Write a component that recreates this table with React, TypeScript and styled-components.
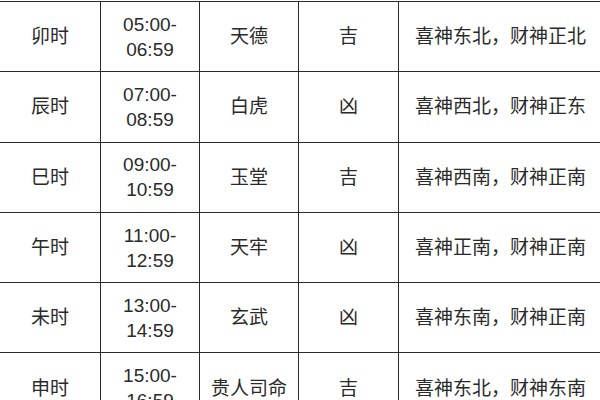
import React from "react";
import styled, { createGlobalStyle } from "styled-components";

const Global = createGlobalStyle`
  html, body { margin: 0; padding: 0; background: #fff; }
  body { overflow: hidden; width: 600px; height: 400px; }
`;

const Frame = styled.div`
  width: 600px;
  height: 400px;
  overflow: hidden;
  padding-top: 1px;
  box-sizing: border-box;
`;

const Table = styled.table`
  border-collapse: collapse;
  table-layout: fixed;
  width: 603px;
  margin-left: -1px;
  font-family: "Liberation Sans", "Noto Sans CJK SC", sans-serif;
  font-size: 19px;
  color: #2a2a2a;
`;

const Col = styled.col<{ $w: number }>`
  width: ${(p) => p.$w}px;
`;

const Cell = styled.td`
  border: 1px solid #2b2b2b;
  height: 69.3px;
  padding: 0;
  text-align: center;
  vertical-align: middle;
  line-height: 25px;
`;

type Row = { name: string; from: string; to: string; god: string; luck: string; dir: string };

const rows: Row[] = [
  { name: "卯时", from: "05:00-", to: "06:59", god: "天德", luck: "吉", dir: "喜神东北，财神正北" },
  { name: "辰时", from: "07:00-", to: "08:59", god: "白虎", luck: "凶", dir: "喜神西北，财神正东" },
  { name: "巳时", from: "09:00-", to: "10:59", god: "玉堂", luck: "吉", dir: "喜神西南，财神正南" },
  { name: "午时", from: "11:00-", to: "12:59", god: "天牢", luck: "凶", dir: "喜神正南，财神正南" },
  { name: "未时", from: "13:00-", to: "14:59", god: "玄武", luck: "凶", dir: "喜神东南，财神正南" },
  { name: "申时", from: "15:00-", to: "16:59", god: "贵人司命", luck: "吉", dir: "喜神东北，财神东南" },
];

export default function App() {
  return (
    <>
      <Global />
      <Frame>
        <Table>
          <colgroup>
            <Col $w={101} />
            <Col $w={99} />
            <Col $w={99} />
            <Col $w={100} />
            <Col $w={204} />
          </colgroup>
          <tbody>
            {rows.map((r) => (
              <tr key={r.name}>
                <Cell>{r.name}</Cell>
                <Cell>
                  {r.from}
                  <br />
                  {r.to}
                </Cell>
                <Cell>{r.god}</Cell>
                <Cell>{r.luck}</Cell>
                <Cell>{r.dir}</Cell>
              </tr>
            ))}
          </tbody>
        </Table>
      </Frame>
    </>
  );
}
